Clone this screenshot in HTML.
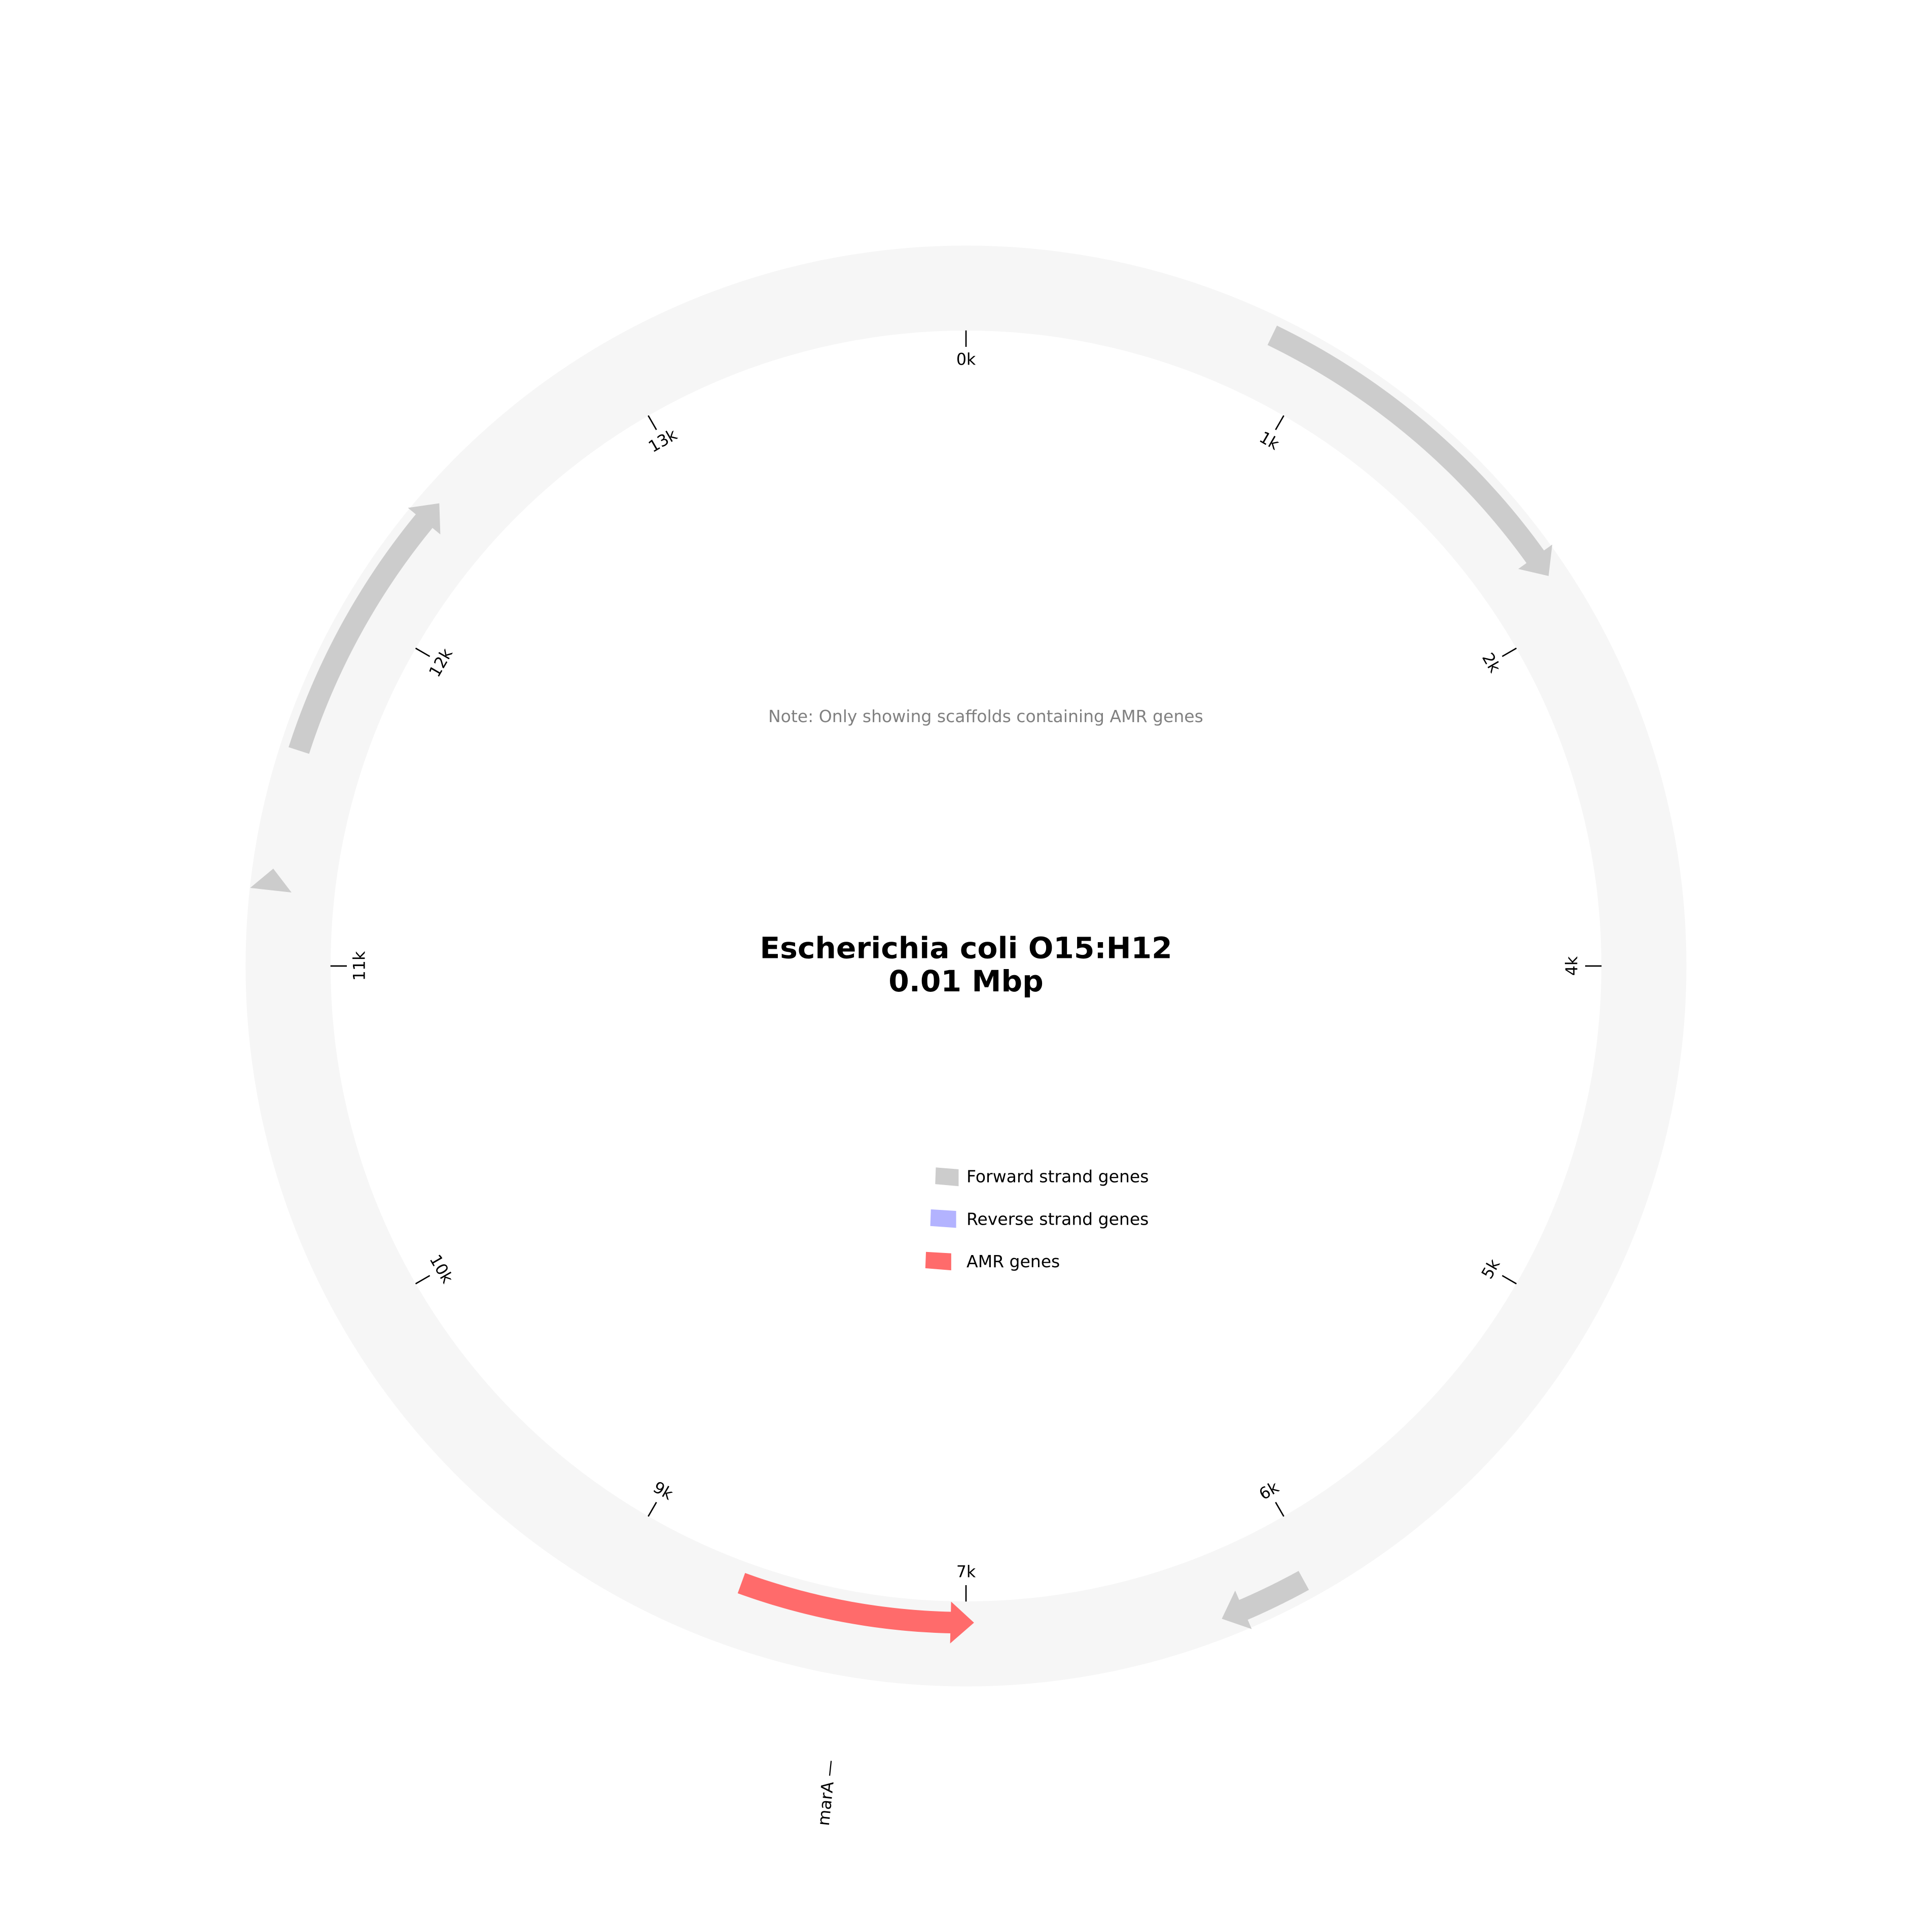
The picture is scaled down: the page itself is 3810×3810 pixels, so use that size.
<!DOCTYPE html>
<html><head><meta charset="utf-8"><style>
html,body{margin:0;padding:0;background:#fff;}
svg{display:block;}
text{font-family:"DejaVu Sans","Liberation Sans",sans-serif;}
</style></head><body>
<svg id="s" width="3810" height="3810" viewBox="0 0 1568 1568" xmlns="http://www.w3.org/2000/svg">
<rect width="1568" height="1568" fill="#fff"/>
<circle cx="784" cy="784" r="550.2" fill="none" stroke="#f6f6f6" stroke-width="69"/>
<g id="genes"></g>
<polygon points="203,720.6 221.8,705 236.6,724.3" fill="#cccccc"/>
<g id="ticks" stroke="#000" stroke-width="1.1"></g>
<g id="labels" font-size="13" fill="#000"></g>
<text x="800" y="586" font-size="13.6" fill="#808080" text-anchor="middle">Note: Only showing scaffolds containing AMR genes</text>
<text x="784" y="777.6" font-size="24" font-weight="bold" text-anchor="middle">Escherichia coli O15:H12</text>
<text x="784" y="804.6" font-size="24" font-weight="bold" text-anchor="middle">0.01 Mbp</text>
<polygon points="759.5,947.5 778,949 778,962.7 759,961" fill="#cccccc"/>
<polygon points="755.5,981.5 776,982.8 776,996.5 755,995" fill="#b3b3ff"/>
<polygon points="751.5,1016 772,1017.2 772,1031 751,1029.3" fill="#ff6b6b"/>
<text x="784.4" y="959.6" font-size="13.6">Forward strand genes</text>
<text x="784.4" y="994" font-size="13.6">Reverse strand genes</text>
<text x="784.4" y="1028.4" font-size="13.6">AMR genes</text>
<text x="0" y="0" font-size="13.4" text-anchor="middle" dominant-baseline="central" transform="translate(671,1455) rotate(-84)">marA —</text>
</svg>
<script>
var C=784;
function P(r,a){var t=a*Math.PI/180;return [C+r*Math.sin(t),C-r*Math.cos(t)];}
function f(p){return p[0].toFixed(2)+","+p[1].toFixed(2);}
function arrow(r,a1,a2,w,hw,hlen,color){
 var dir=a2>a1?1:-1;var hl=hlen/r*180/Math.PI;var ab=a2-dir*hl;
 var pts=[],n=40,i;
 for(i=0;i<=n;i++)pts.push(P(r+w/2,a1+(ab-a1)*i/n));
 pts.push(P(r+hw/2,ab));pts.push(P(r,a2));pts.push(P(r-hw/2,ab));
 for(i=n;i>=0;i--)pts.push(P(r-w/2,a1+(ab-a1)*i/n));
 return '<polygon fill="'+color+'" points="'+pts.map(f).join(" ")+'"/>';
}
var g='';
g+=arrow(569,25.9,56.2,17.5,34,19,"#cccccc");
g+=arrow(569,287.9,311.3,17.5,34,19,"#cccccc");
g+=arrow(569,151.2,158.6,17.5,34,19,"#cccccc");
g+=arrow(533,200,179.3,17.5,34,19,"#ff6b6b");
document.getElementById("genes").innerHTML=g;
var t='',l='';
var names=["0k","1k","2k","4k","5k","6k","7k","9k","10k","11k","12k","13k"];
for(var i=0;i<12;i++){
 var a=i*30;var p1=P(515.8,a),p2=P(502.5,a),pl=P(492,a);
 t+='<line x1="'+p1[0].toFixed(2)+'" y1="'+p1[1].toFixed(2)+'" x2="'+p2[0].toFixed(2)+'" y2="'+p2[1].toFixed(2)+'"/>';
 var rot=a>180?a-360:a;if(rot>90)rot-=180;if(rot<-90)rot+=180;
 if(a==90)rot=-90; if(a==270)rot=-90;
 l+='<text text-anchor="middle" dominant-baseline="central" transform="translate('+pl[0].toFixed(2)+','+pl[1].toFixed(2)+') rotate('+rot+')">'+names[i]+'</text>';
}
document.getElementById("ticks").innerHTML=t;
document.getElementById("labels").innerHTML=l;
</script>
</body></html>
